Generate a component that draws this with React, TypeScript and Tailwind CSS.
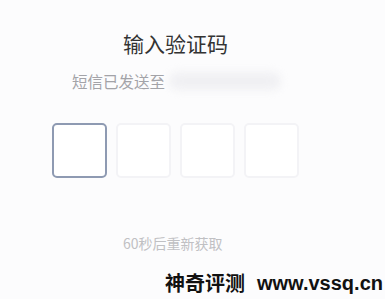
export default function App() {
  const boxes = [0, 1, 2, 3];

  return (
    <main
      className="flex h-[299px] w-[385px] flex-col overflow-hidden bg-[#fcfcfd]"
      style={{ fontFamily: '"Noto Sans CJK SC", "Noto Sans", sans-serif' }}
    >
      <h1 className="mt-[28px] shrink-0 pl-[123px] text-[21px] leading-[30px] font-normal text-[#333]">
        输入验证码
      </h1>

      <div className="mt-[12px] flex shrink-0 items-center pl-[72px]">
        <span className="text-[15.5px] leading-[22px] text-[#a3a3a8]">短信已发送至</span>
        {/* blurred phone number */}
        <span className="ml-[4px] h-[18px] w-[112px] rounded-full bg-[#f0f0f3] blur-[4px]" />
      </div>

      <div className="mt-[31px] flex shrink-0 gap-[9px] pl-[52px]">
        {boxes.map((i) => (
          <div
            key={i}
            className={
              i === 0
                ? "h-[55px] w-[55px] rounded-[5px] border-2 border-[#8e9ab2] bg-white"
                : "h-[55px] w-[55px] rounded-[5px] border-2 border-[#f3f3f6] bg-white"
            }
          />
        ))}
      </div>

      <p className="mt-[55px] shrink-0 pl-[123px] text-[14px] leading-[20px] text-[#c0c0c3]">
        60秒后重新获取
      </p>

      <div className="mt-[18px] flex shrink-0 items-center whitespace-nowrap pl-[165px] leading-[24px] text-[#111]">
        <span className="text-[20px] font-bold">神奇评测</span>
        <span
          className="ml-[12px] text-[20px] font-bold"
          style={{ fontFamily: '"Liberation Sans", Arial, sans-serif' }}
        >
          www.vssq.cn
        </span>
      </div>
    </main>
  );
}
